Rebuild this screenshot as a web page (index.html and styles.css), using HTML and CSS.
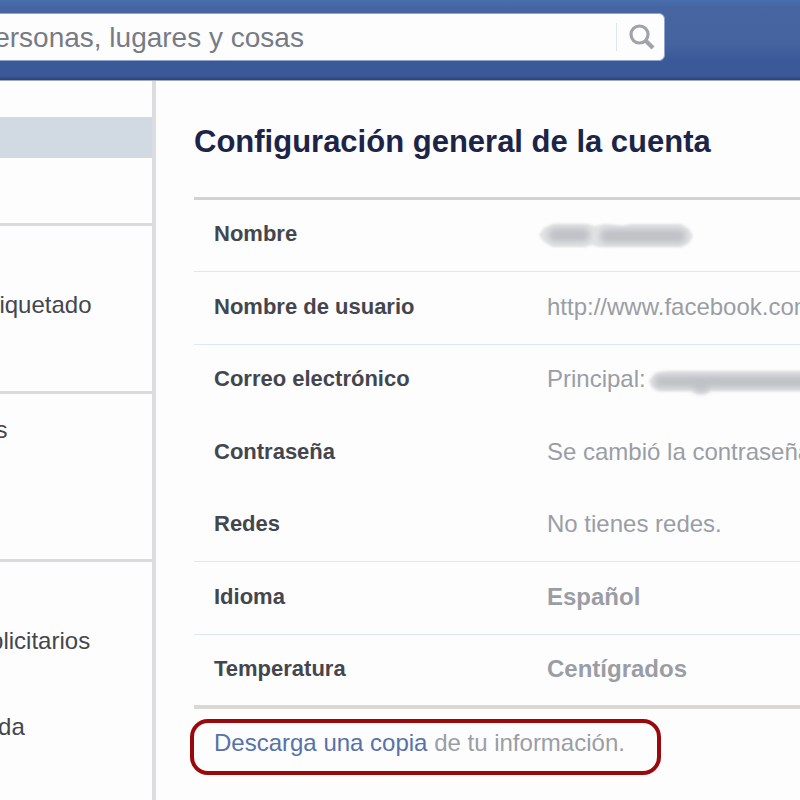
FILE: index.html
```
<!DOCTYPE html>
<html lang="es">
<head>
<meta charset="utf-8">
<title>Configuración general de la cuenta</title>
<link rel="stylesheet" href="styles.css">
</head>
<body>
<header class="topbar">
  <form class="search">
    <input class="search-input" type="text" aria-label="Buscar" placeholder="Busca personas, lugares y cosas">
    <button class="search-button" type="button" aria-label="Buscar">
      <svg width="26" height="26" viewBox="0 0 26 26" fill="none" stroke="#a0a3aa">
        <circle cx="10.5" cy="10.5" r="8.5" stroke-width="3.2"/>
        <path d="M16.5 16.5L24 24" stroke-width="4.2"/>
      </svg>
    </button>
  </form>
</header>
<div class="shell">
  <nav class="sidebar">
    <ul class="group">
      <li class="selected"></li>
      <li></li>
    </ul>
    <ul class="group">
      <li></li>
      <li><a href="#">Biografía y etiquetado</a></li>
      <li></li>
    </ul>
    <ul class="group">
      <li><a href="#">Notificaciones</a></li>
      <li></li>
      <li></li>
    </ul>
    <ul class="group">
      <li></li>
      <li><a href="#">Anuncios publicitarios</a></li>
      <li></li>
      <li><a href="#">Panel de ayuda</a></li>
    </ul>
  </nav>
  <main class="content">
    <h1>Configuración general de la cuenta</h1>
    <table class="settings">
      <tr><th scope="row">Nombre</th><td><svg class="mask" width="156" height="28" viewBox="4 2 156 28"><g class="halo"><path d="M0 15L5 8L14 4H48L56 6L66 4L84 6L92 4H142L150 9L154 16L150 23L142 27H60L52 25L46 27H14L5 22Z"/></g><g class="smudge"><rect x="9" y="8" width="42" height="14" rx="7"/><rect x="61" y="9" width="86" height="14" rx="6"/></g></svg></td></tr>
      <tr><th scope="row">Nombre de usuario</th><td>http://www.facebook.com/</td></tr>
      <tr class="plain"><th scope="row">Correo electrónico</th><td>Principal: <svg class="mask" width="160" height="28" viewBox="0 1 160 28"><g class="halo"><path d="M1 15L8 7L20 5H170V25H62L58 28H48L44 25H10L4 21Z"/></g><g class="smudge"><rect x="6" y="9" width="165" height="13" rx="6"/><rect x="46" y="16" width="14" height="10" rx="4"/></g></svg></td></tr>
      <tr class="plain"><th scope="row">Contraseña</th><td>Se cambió la contraseña</td></tr>
      <tr><th scope="row">Redes</th><td>No tienes redes.</td></tr>
      <tr><th scope="row">Idioma</th><td><strong>Español</strong></td></tr>
      <tr><th scope="row">Temperatura</th><td><strong>Centígrados</strong></td></tr>
    </table>
    <p class="download"><a href="#">Descarga una copia</a> de tu información.</p>
  </main>
</div>
</body>
</html>
```
FILE: styles.css
```
* { box-sizing: border-box; }

body {
  margin: 0;
  min-height: 100vh;
  display: flex;
  flex-direction: column;
  overflow: hidden;
  background: #fdfdfd;
  color: #44464e;
  font: 24px/28px "Liberation Sans", Arial, sans-serif;
}

a { color: inherit; text-decoration: none; }

.topbar {
  height: 81px;
  padding: 13px 135px 0 0;
  background: linear-gradient(#486eae 0, #4665a1 8px, #44639f 44px, #3b5998 60px, #3b5998 76px, #27437f 80px);
  border-bottom: 1px solid #a5a9b4;
}

.search {
  display: flex;
  align-items: center;
  height: 48px;
  margin-left: -120px;
  border: 1px solid #8fa5d0;
  border-radius: 6px;
  background: #fdfdfd;
}

.search-input {
  flex: 1;
  min-width: 0;
  height: 46px;
  padding: 2px 0 0 12px;
  border: 0;
  background: transparent;
  font: 28px/32px "Liberation Sans", Arial, sans-serif;
}

.search-input::placeholder { color: #777b85; opacity: 1; }

.search-button {
  display: flex;
  align-items: center;
  width: 48px;
  height: 28px;
  padding: 0 0 0 12px;
  border: 0;
  border-left: 1px solid #dce6ee;
  background: transparent;
}

.shell {
  flex: 1;
  display: flex;
  margin-left: -142px;
}

.sidebar {
  flex: 0 0 298px;
  border-right: 4px solid #dcdde0;
  padding-top: 20px;
}

.group {
  margin: 0;
  padding: 15px 0 21px;
  list-style: none;
}

.group + .group { border-top: 3px solid #d9dadd; }

.group li {
  height: 43px;
  padding: 7px 0;
}

.group .selected {
  background: #d1dae3;
  height: 41px;
  margin: 1px 0;
}

.content {
  flex: 1;
  min-width: 0;
  padding: 42px 0 0 38px;
}

h1 {
  margin: 0 0 36px;
  color: #1c2447;
  font-size: 31px;
  line-height: 38px;
  white-space: nowrap;
}

.settings {
  width: 100%;
  table-layout: fixed;
  border-collapse: separate;
  border-spacing: 0;
  border-top: 3px solid #d2d2d2;
  border-bottom: 4px solid #d9d8d3;
  white-space: nowrap;
}

.settings th,
.settings td {
  height: 72px;
  padding: 0 0 3px;
  border-bottom: 1px solid #d8ebf5;
  line-height: 28px;
  vertical-align: middle;
}

.settings tr:nth-child(even) > * { height: 73px; }

.settings .plain > * { border-bottom-color: transparent; }

.settings tr:last-child > * {
  height: 70px;
  border-bottom: 0;
}

.settings th {
  width: 353px;
  padding-left: 20px;
  font-size: 22px;
  text-align: left;
}

.settings td { color: #9a9da5; }

.mask { vertical-align: middle; margin: -4px; }
.halo { fill: #e2e3e5; filter: blur(1px); }
.smudge { fill: #bfc1c6; filter: blur(3px); }
td + td, td > .mask { overflow: visible; }

.download {
  width: max-content;
  margin: 10px 0 0 -4px;
  padding: 6px 32px 14px 20px;
  border: 4px solid #9b080c;
  border-radius: 18px;
  color: #9a9da5;
}

.download a { color: #5672a8; }
```
